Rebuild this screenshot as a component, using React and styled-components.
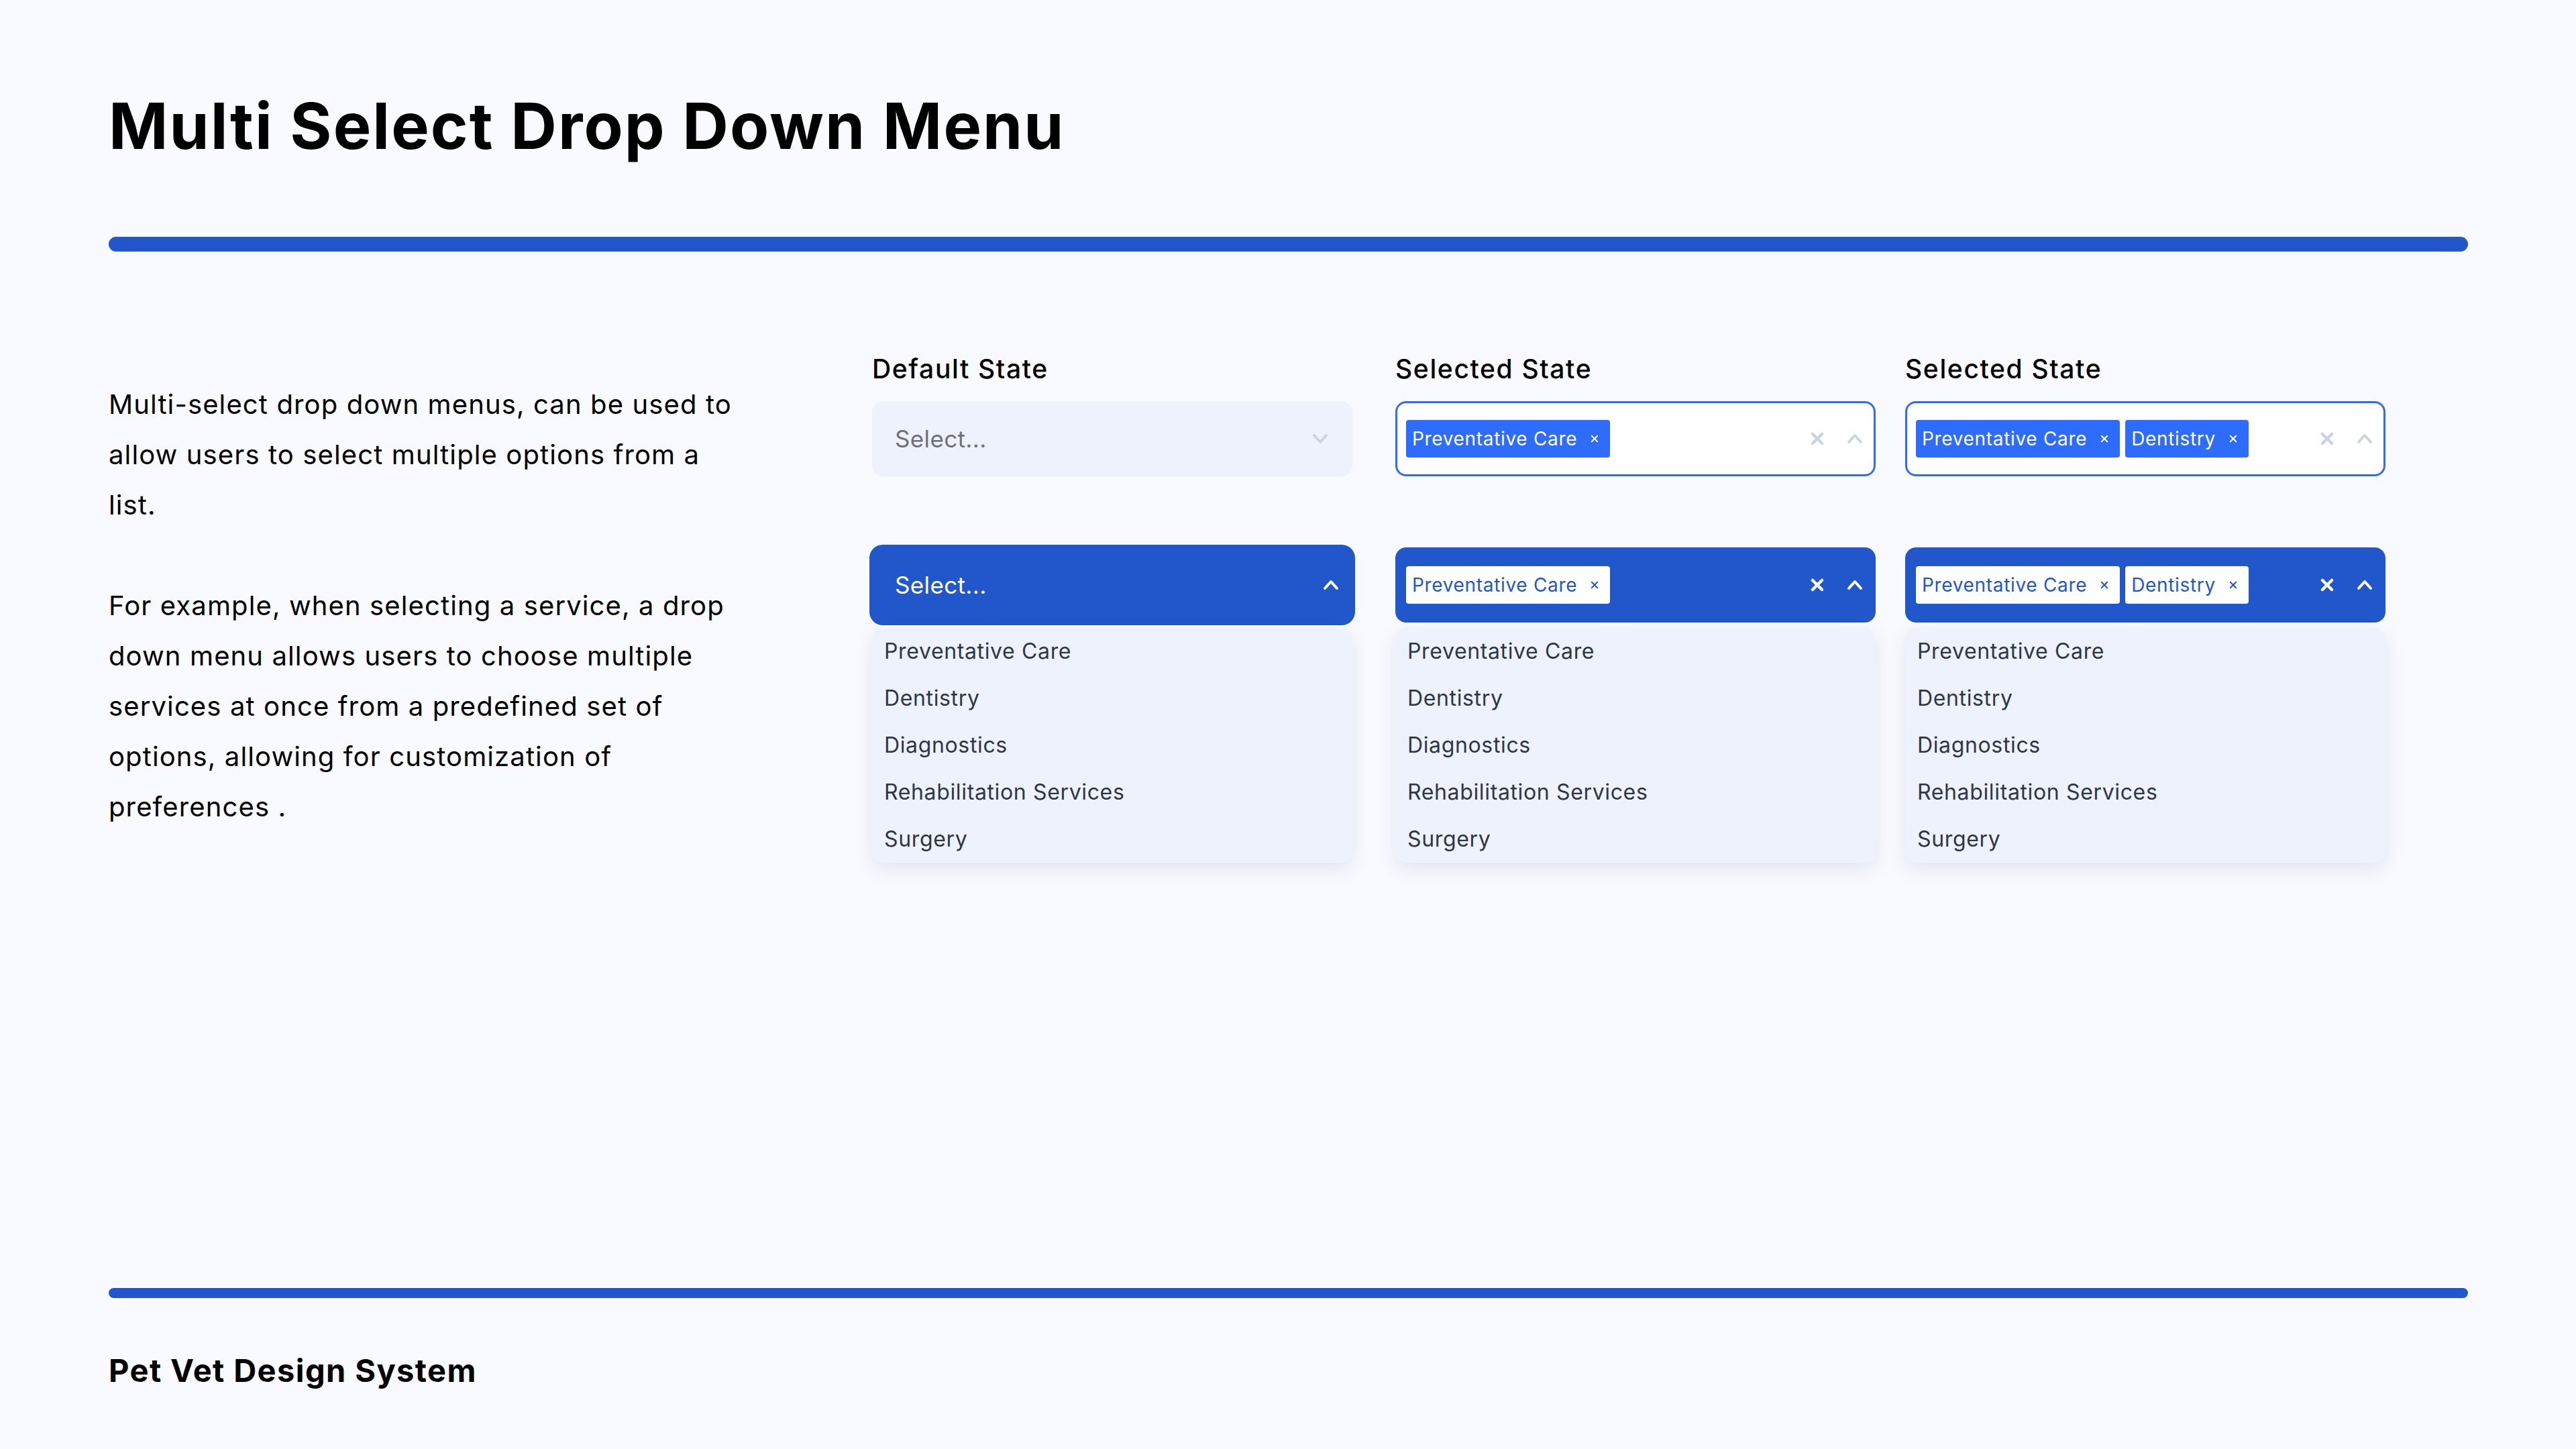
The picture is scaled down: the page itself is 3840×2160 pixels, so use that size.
import React from 'react';
import styled, { createGlobalStyle, css } from 'styled-components';

const DARK = '#2257CC';
const BRIGHT = '#2E6BFF';
const PANEL = '#EEF2FC';
const MUTED = '#CBD5E1';

const GlobalStyle = createGlobalStyle`
  html, body { margin: 0; padding: 0; background: #F8FAFF; }
  body { font-family: Inter, "Noto Sans", sans-serif; color: #000; }
  * { box-sizing: border-box; }
`;

const Page = styled.div`
  width: 3840px;
  height: 2160px;
  display: flex;
  flex-direction: column;
  padding: 141px 161px 89px 162px;
`;

const Title = styled.h1`
  margin: 0;
  font-size: 95px;
  line-height: 94px;
  font-weight: 700;
  letter-spacing: 0.022em;
`;

const Rule = styled.div`
  height: ${(p) => (p.$thick ? 22 : 15)}px;
  margin-top: ${(p) => p.$top || 0}px;
  background: ${DARK};
  border-radius: 12px;
`;

const Main = styled.section`
  display: grid;
  grid-template-columns: 1138px 1fr;
  margin-top: 152px;
`;

const Intro = styled.div`
  padding-top: 38px;
`;

const Para = styled.p`
  margin: 0 0 75px;
  font-size: 40px;
  line-height: 75px;
  font-weight: 400;
  letter-spacing: 0.028em;
  white-space: nowrap;
`;

const States = styled.div`
  display: grid;
  grid-template-columns: 780px 760px 716px;
  align-items: start;
`;

const Column = styled.div`
  display: flex;
  flex-direction: column;
  width: 716px;
`;

const Label = styled.h3`
  margin: 0 0 25px;
  font-size: 39px;
  line-height: 46px;
  font-weight: 500;
  letter-spacing: 0.042em;
`;

const Box = styled.div`
  height: 112px;
  border-radius: 16px;
  display: flex;
  align-items: center;
  gap: 8px;
  padding: ${(p) => p.$pad || '0 16px 0 13px'};
  margin-top: ${(p) => p.$top || 0}px;
  ${(p) =>
    p.$variant === 'empty' &&
    css`
      background: ${PANEL};
    `}
  ${(p) =>
    p.$variant === 'selected' &&
    css`
      background: #fff;
      border: 3px solid ${BRIGHT};
    `}
  ${(p) =>
    p.$variant === 'open' &&
    css`
      background: ${DARK};
    `}
  ${(p) =>
    p.$ring &&
    css`
      box-shadow: 0 0 0 4px ${DARK};
    `}
`;

const Placeholder = styled.span`
  flex: 1;
  font-size: 35px;
  letter-spacing: 0.01em;
  color: ${(p) => (p.$light ? '#fff' : '#6E717D')};
`;

const Chips = styled.div`
  flex: 1;
  display: flex;
  gap: 8px;
  align-items: center;
`;

const Chip = styled.span`
  height: 56px;
  display: inline-flex;
  align-items: center;
  gap: 20px;
  padding: 0 17px 0 9px;
  border-radius: 4px;
  font-size: 28px;
  letter-spacing: 0.024em;
  background: ${(p) => (p.$inverse ? '#fff' : BRIGHT)};
  color: ${(p) => (p.$inverse ? DARK : '#fff')};
`;

const Icons = styled.div`
  display: flex;
  align-items: center;
  gap: 34px;
`;

const Menu = styled.ul`
  list-style: none;
  margin: 8px 0 0;
  padding: 0 18px;
  background: ${PANEL};
  border-radius: 16px;
  box-shadow: 0 10px 28px rgba(40, 52, 90, 0.1);
`;

const Item = styled.li`
  height: 70px;
  line-height: 70px;
  font-size: 32px;
  letter-spacing: 0.02em;
  color: #2D3748;
`;

const FooterText = styled.div`
  margin-top: 80px;
  font-size: 47px;
  line-height: 56px;
  font-weight: 700;
  letter-spacing: 0.03em;
`;

const Footer = styled.footer`
  margin-top: auto;
`;

const Chevron = ({ up, color }) => (
  <svg width="24" height="16" viewBox="0 0 24 16" fill="none">
    <path
      d={up ? 'M3 13 L12 3 L21 13' : 'M3 3 L12 13 L21 3'}
      stroke={color}
      strokeWidth="4"
      strokeLinecap="round"
      strokeLinejoin="round"
    />
  </svg>
);

const Cross = ({ size = 20, color, width = 4.5 }) => (
  <svg width={size} height={size} viewBox="0 0 20 20" fill="none">
    <path
      d="M3 3 L17 17 M17 3 L3 17"
      stroke={color}
      strokeWidth={width}
      strokeLinecap="round"
    />
  </svg>
);

const OPTIONS = [
  'Preventative Care',
  'Dentistry',
  'Diagnostics',
  'Rehabilitation Services',
  'Surgery',
];

const ChipList = ({ items, inverse }) => (
  <Chips>
    {items.map((t) => (
      <Chip key={t} $inverse={inverse}>
        {t}
        <Cross size={12} width={3.4} color={inverse ? DARK : '#fff'} />
      </Chip>
    ))}
  </Chips>
);

const MenuList = () => (
  <Menu>
    {OPTIONS.map((o) => (
      <Item key={o}>{o}</Item>
    ))}
  </Menu>
);

const SelectedColumn = ({ items }) => (
  <Column>
    <Label>Selected State</Label>
    <Box $variant="selected">
      <ChipList items={items} />
      <Icons>
        <Cross color={MUTED} />
        <Chevron up color={MUTED} />
      </Icons>
    </Box>
    <Box $variant="open" $top={106} $pad="0 19px 0 16px">
      <ChipList items={items} inverse />
      <Icons>
        <Cross color="#fff" />
        <Chevron up color="#fff" />
      </Icons>
    </Box>
    <MenuList />
  </Column>
);

export default function App() {
  return (
    <>
      <GlobalStyle />
      <Page>
        <Title>Multi Select Drop Down Menu</Title>
        <Rule $thick $top={118} />
        <Main>
          <Intro>
            <Para>
              Multi-select drop down menus, can be used to
              <br />
              allow users to select multiple options from a
              <br />
              list.
            </Para>
            <Para>
              For example, when selecting a service, a drop
              <br />
              down menu allows users to choose multiple
              <br />
              services at once from a predefined set of
              <br />
              options, allowing for customization of
              <br />
              preferences .
            </Para>
          </Intro>
          <States>
            <Column>
              <Label>Default State</Label>
              <Box $variant="empty" $pad="0 36px 0 34px">
                <Placeholder>Select...</Placeholder>
                <Chevron color={MUTED} />
              </Box>
              <Box $variant="open" $ring $top={106} $pad="0 20px 0 34px">
                <Placeholder $light>Select...</Placeholder>
                <Chevron up color="#fff" />
              </Box>
              <MenuList />
            </Column>
            <SelectedColumn items={['Preventative Care']} />
            <SelectedColumn items={['Preventative Care', 'Dentistry']} />
          </States>
        </Main>
        <Footer>
          <Rule />
          <FooterText>Pet Vet Design System</FooterText>
        </Footer>
      </Page>
    </>
  );
}
